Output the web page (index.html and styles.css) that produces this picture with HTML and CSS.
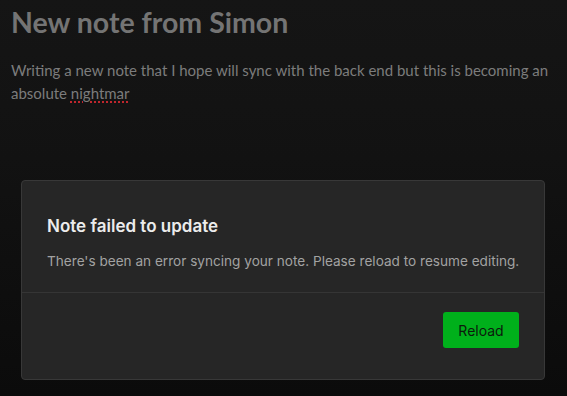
FILE: index.html
```html
<!DOCTYPE html>
<html>
<head>
<meta charset="utf-8">
<link rel="stylesheet" href="styles.css">
</head>
<body>
<main class="note">
  <h1 class="note-title">New note from Simon</h1>
  <p class="note-body">Writing a new note that I hope will sync with the back end but this is becoming an absolute <span class="misspelled">nightmar</span></p>
</main>
<div class="modal">
  <div class="modal-content">
    <h2 class="modal-title">Note failed to update</h2>
    <p class="modal-text">There's been an error syncing your note. Please reload to resume editing.</p>
  </div>
  <div class="modal-footer">
    <button class="btn-reload">Reload</button>
  </div>
</div>
</body>
</html>
```
FILE: styles.css
```css
html, body {
  margin: 0;
  height: 100%;
}
body {
  background: linear-gradient(to bottom, #151515 0%, #121212 40%, #0b0b0b 100%);
  overflow: hidden;
  position: relative;
}
.note {
  padding: 4px 12px 0 11px;
  font-family: "Lato", "Noto Sans", sans-serif;
}
.note-title {
  margin: 0;
  font-size: 28.5px;
  font-weight: 700;
  color: #747474;
  line-height: 36px;
}
.note-body {
  margin: 19px 0 0;
  font-size: 15px;
  line-height: 23px;
  color: #7c7c7c;
}
.misspelled {
  text-decoration: underline dotted #c0262d;
  text-decoration-thickness: 2px;
  text-underline-offset: 2px;
}
.modal {
  position: absolute;
  left: 21px;
  top: 180px;
  width: 522px;
  height: 198px;
  background: #262626;
  border: 1px solid #383838;
  border-radius: 4px;
  font-family: "Inter", "Roboto", sans-serif;
  display: flex;
  flex-direction: column;
}
.modal-content {
  padding: 34px 25px 0;
  height: 77px;
  border-bottom: 1px solid #353535;
}
.modal-title {
  margin: 0;
  font-size: 17px;
  font-weight: 600;
  color: #ececec;
  line-height: 22px;
}
.modal-text {
  margin: 15px 0 0;
  font-size: 13.6px;
  color: #a2a2a2;
  line-height: 18px;
  white-space: nowrap;
}
.modal-footer {
  display: flex;
  justify-content: flex-end;
  padding: 19px 25px 0;
}
.btn-reload {
  width: 76px;
  height: 36px;
  border: none;
  border-radius: 3px;
  background: #00b01b;
  color: #0c1a0c;
  font-family: "Inter", "Roboto", sans-serif;
  font-size: 14px;
  padding: 0;
}
```
